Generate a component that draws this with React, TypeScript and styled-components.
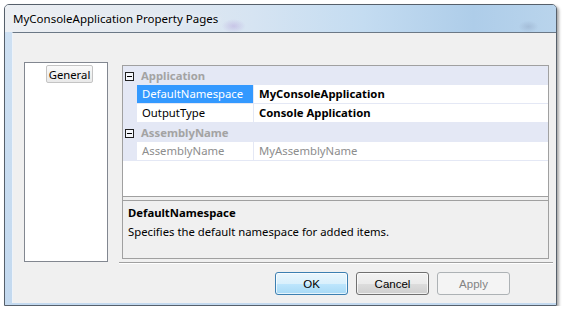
import React from "react";
import styled, { createGlobalStyle } from "styled-components";

const Global = createGlobalStyle`
  html, body { margin: 0; padding: 0; background: #ffffff; }
  body {
    font-family: "Noto Sans", "DejaVu Sans", sans-serif;
    font-size: 11.3px;
    color: #000;
  }
  * { box-sizing: border-box; }
`;

const LAV = "#e4e8f5";

const Window = styled.div`
  margin: 4px 0 0 4px;
  width: 553px;
  height: 302px;
  display: flex;
  flex-direction: column;
  border: 1px solid #56606b;
  border-radius: 5px 5px 0 0;
  background: linear-gradient(to bottom, #cfe1f3, #c3d9ef);
  box-shadow: 2px 2px 3px rgba(0, 0, 0, 0.35);
  overflow: hidden;
`;

const TitleBar = styled.div`
  height: 27px;
  display: flex;
  align-items: center;
  padding-left: 8px;
  background:
    radial-gradient(ellipse 12px 7px at 41.5% 78%, rgba(175, 150, 215, 0.4), transparent),
    radial-gradient(ellipse 10px 6px at 95% 80%, rgba(140, 160, 190, 0.4), transparent),
    linear-gradient(to right, #eceff3 0%, #e3e9f0 25%, #d6e4f2 45%, #c4dcf1 65%, #aecde9 85%, #b9d4ec 100%);
`;

const Title = styled.span`
  font-size: 11.5px;
  color: #000;
  text-shadow: 0 0 6px rgba(255, 255, 255, 0.95);
`;

const FrameBody = styled.div`
  flex: 1;
  display: flex;
  padding: 0 0 2px 7px;
`;

const Client = styled.div`
  flex: 1;
  display: flex;
  align-items: flex-start;
  background: #f0f0f0;
  border-top: 1px solid #6b7886;
  border-left: 1px solid #eef3f9;
  padding: 29px 0 0 11px;
`;

const LeftPane = styled.div`
  width: 84px;
  height: 200px;
  background: #fff;
  border: 1px solid #828790;
  padding: 2px 0 0 21px;
`;

const PageItem = styled.div`
  display: inline-flex;
  align-items: center;
  justify-content: center;
  width: 47px;
  height: 18px;
  border: 1px solid #c4c4c4;
  border-radius: 2px;
  background: linear-gradient(to bottom, #fafafa, #e9e9e9);
`;

const RightCol = styled.div`
  margin-left: 11px;
  width: 434px;
  display: flex;
  flex-direction: column;
`;

const Grid = styled.div`
  margin: 3px 0 0 3px;
  width: 427px;
  height: 194px;
  border: 1px solid #a0a0a0;
  display: flex;
  flex-direction: column;
  background: #f0f0f0;
`;

const List = styled.div`
  height: 131px;
  background: #fff;
  border-bottom: 1px solid #a0a0a0;
`;

const Row = styled.div<{ $category?: boolean }>`
  display: grid;
  grid-template-columns: 14px 117px 1fr;
  height: 19px;
  background: ${(p) => (p.$category ? LAV : "#fff")};
  border-bottom: 1px solid ${LAV};
  line-height: 18px;
`;

const Gutter = styled.div`
  background: ${LAV};
  position: relative;
`;

const Expander = styled.span`
  position: absolute;
  left: 2px;
  top: 6px;
  width: 9px;
  height: 9px;
  border: 1px solid #202020;
  background: #f4f6fb;
  &::after {
    content: "";
    position: absolute;
    left: 1px;
    top: 3px;
    width: 5px;
    height: 1px;
    background: #000;
  }
`;

const CategoryName = styled.div`
  grid-column: 2 / 4;
  padding-left: 4px;
  font-weight: bold;
  color: #a3a3a3;
  line-height: 19px;
`;

const Label = styled.div<{ $selected?: boolean; $disabled?: boolean }>`
  padding-left: 5px;
  border-right: 1px solid ${LAV};
  background: ${(p) => (p.$selected ? "#3399ff" : "#fff")};
  color: ${(p) => (p.$selected ? "#fff" : p.$disabled ? "#8d8d8d" : "#000")};
  white-space: nowrap;
  overflow: hidden;
`;

const Value = styled.div<{ $disabled?: boolean }>`
  padding-left: 5px;
  font-weight: ${(p) => (p.$disabled ? "normal" : "bold")};
  color: ${(p) => (p.$disabled ? "#8d8d8d" : "#000")};
  white-space: nowrap;
`;

const Desc = styled.div`
  flex: 1;
  margin-top: 3px;
  border-top: 1px solid #a0a0a0;
  padding: 2px 5px;
  line-height: 19px;
`;

const DescTitle = styled.div`
  font-weight: bold;
`;

const Separator = styled.div`
  margin-top: 3px;
  height: 2px;
  border-top: 1px solid #a0a0a0;
  border-bottom: 1px solid #ffffff;
`;

const ButtonRow = styled.div`
  margin-top: 8px;
  display: flex;
  justify-content: flex-end;
  gap: 8px;
  padding-right: 43px;
`;

const Button = styled.button<{ $variant?: "default" | "normal" | "disabled" }>`
  width: 73px;
  height: 23px;
  padding: 0;
  font-family: "Liberation Sans", Arial, sans-serif;
  font-size: 11.5px;
  border-radius: 3px;
  border: 1px solid
    ${(p) => (p.$variant === "default" ? "#3c7fb1" : p.$variant === "disabled" ? "#adb2b5" : "#707070")};
  color: ${(p) => (p.$variant === "disabled" ? "#838383" : "#000")};
  background: ${(p) =>
    p.$variant === "default"
      ? "linear-gradient(to bottom, #eaf6fd 0%, #d9f0fc 50%, #bee6fd 51%, #a7d9f5 100%)"
      : p.$variant === "disabled"
      ? "#f4f4f4"
      : "linear-gradient(to bottom, #f2f2f2 0%, #ebebeb 50%, #dddddd 51%, #cfcfcf 100%)"};
  box-shadow: ${(p) =>
    p.$variant === "disabled" ? "none" : "inset 0 0 0 1px rgba(255, 255, 255, 0.7)"};
`;

type Prop = { name: string; value: string; selected?: boolean; disabled?: boolean };
type Category = { name: string; props: Prop[] };

const data: Category[] = [
  {
    name: "Application",
    props: [
      { name: "DefaultNamespace", value: "MyConsoleApplication", selected: true },
      { name: "OutputType", value: "Console Application" },
    ],
  },
  {
    name: "AssemblyName",
    props: [{ name: "AssemblyName", value: "MyAssemblyName", disabled: true }],
  },
];

export default function App() {
  return (
    <>
      <Global />
      <Window>
        <TitleBar>
          <Title>MyConsoleApplication Property Pages</Title>
        </TitleBar>
        <FrameBody>
          <Client>
            <LeftPane>
              <PageItem>General</PageItem>
            </LeftPane>
            <RightCol>
              <Grid>
                <List>
                  {data.map((cat) => (
                    <React.Fragment key={cat.name}>
                      <Row $category>
                        <Gutter>
                          <Expander />
                        </Gutter>
                        <CategoryName>{cat.name}</CategoryName>
                      </Row>
                      {cat.props.map((p) => (
                        <Row key={p.name}>
                          <Gutter />
                          <Label $selected={p.selected} $disabled={p.disabled}>
                            {p.name}
                          </Label>
                          <Value $disabled={p.disabled}>{p.value}</Value>
                        </Row>
                      ))}
                    </React.Fragment>
                  ))}
                </List>
                <Desc>
                  <DescTitle>DefaultNamespace</DescTitle>
                  <div>Specifies the default namespace for added items.</div>
                </Desc>
              </Grid>
              <Separator />
              <ButtonRow>
                <Button $variant="default">OK</Button>
                <Button $variant="normal">Cancel</Button>
                <Button $variant="disabled" disabled>
                  Apply
                </Button>
              </ButtonRow>
            </RightCol>
          </Client>
        </FrameBody>
      </Window>
    </>
  );
}
